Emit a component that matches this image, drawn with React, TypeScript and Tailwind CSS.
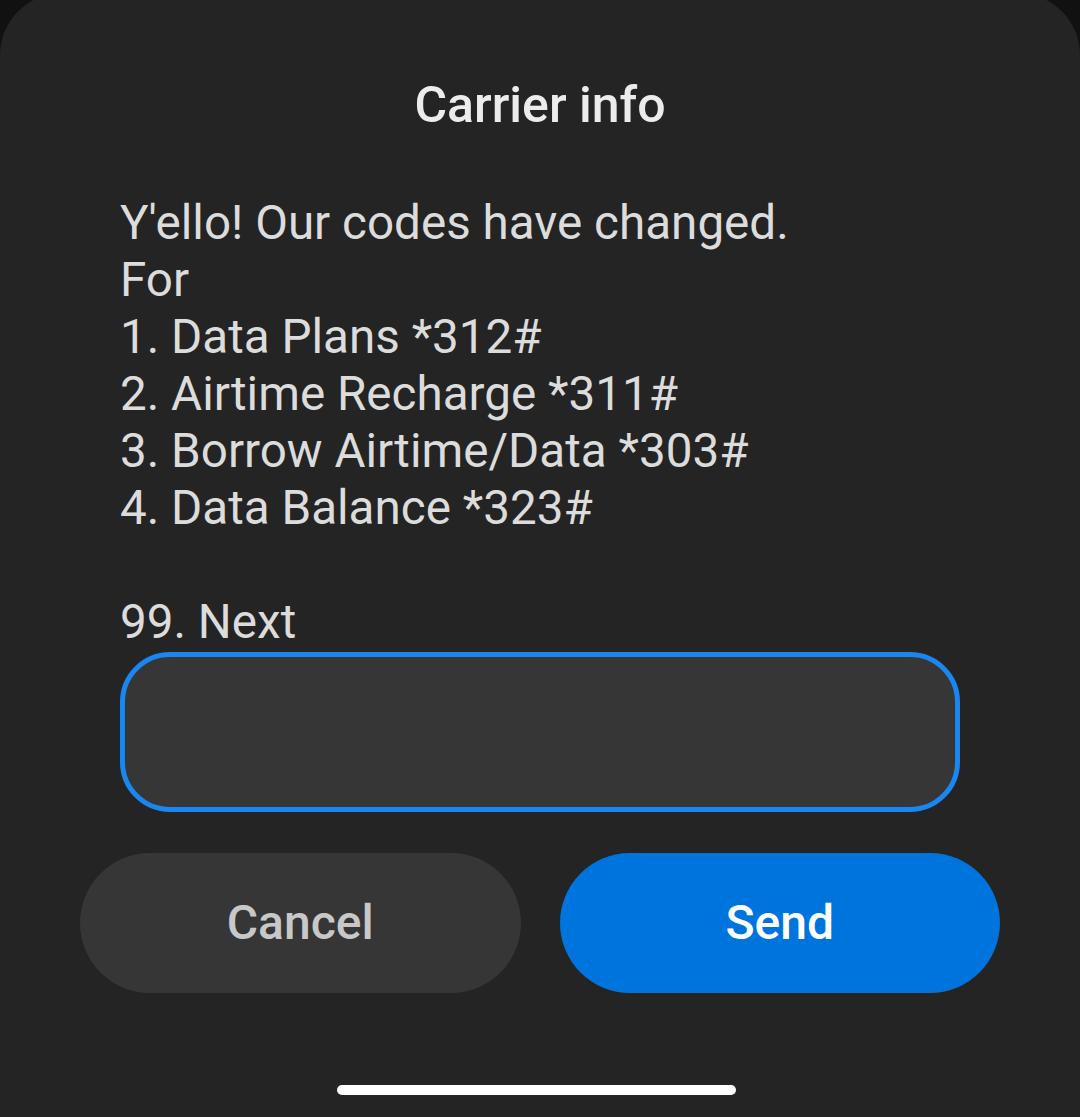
export default function App() {
  const lines = [
    "Y'ello! Our codes have changed.",
    "For",
    "1. Data Plans *312#",
    "2. Airtime Recharge *311#",
    "3. Borrow Airtime/Data *303#",
    "4. Data Balance *323#",
    "",
    "99. Next",
  ];

  return (
    <div
      className="h-[1117px] w-[1080px] overflow-hidden bg-[#111111]"
      style={{ fontFamily: "Roboto, 'Noto Sans', sans-serif" }}
    >
      <div className="-mt-[7px] flex h-[1124px] flex-col rounded-t-[62px] bg-[#242424]">
        <h1 className="mt-[82px] text-center text-[50px] font-medium leading-[60px] text-[#ececec]">
          Carrier info
        </h1>

        <div className="mt-[60px] px-[120px] text-[47.6px] leading-[57px] text-[#dcdcdc]">
          {lines.map((l, i) => (
            <div key={i} className="h-[57px] whitespace-pre">
              {l}
            </div>
          ))}
        </div>

        <div className="mt-px px-[120px]">
          <div className="h-[160px] w-[840px] rounded-[50px] border-[5px] border-[#1a86f0] bg-[#363636]" />
        </div>

        <div className="mt-[41px] flex gap-[39px] px-[80px]">
          <button className="flex h-[140px] flex-1 items-center justify-center rounded-full bg-[#363636] text-[48px] font-medium text-[#c8c8c8]">
            Cancel
          </button>
          <button className="flex h-[140px] flex-1 items-center justify-center rounded-full bg-[#0074dd] text-[48px] font-medium text-white">
            Send
          </button>
        </div>

        <div className="mt-[92px] flex justify-center pr-[7px]">
          <div className="h-[10px] w-[399px] rounded-full bg-white" />
        </div>
      </div>
    </div>
  );
}
